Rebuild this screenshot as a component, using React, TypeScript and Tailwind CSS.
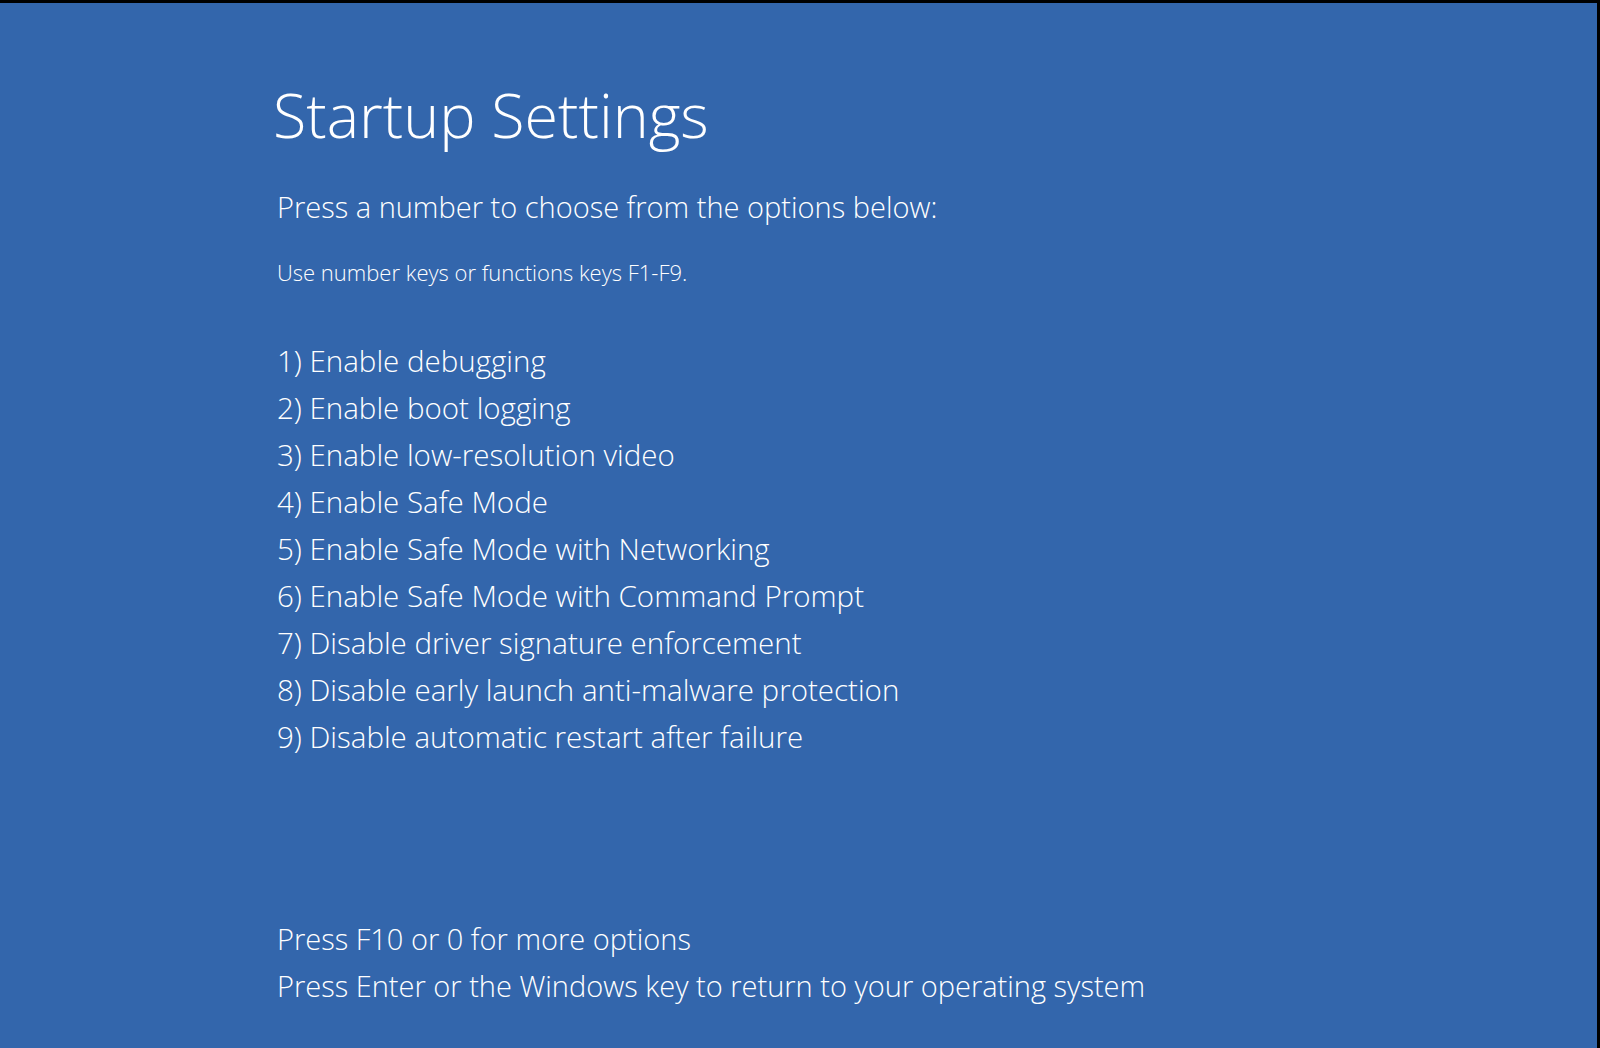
const options = [
  "1) Enable debugging",
  "2) Enable boot logging",
  "3) Enable low-resolution video",
  "4) Enable Safe Mode",
  "5) Enable Safe Mode with Networking",
  "6) Enable Safe Mode with Command Prompt",
  "7) Disable driver signature enforcement",
  "8) Disable early launch anti-malware protection",
  "9) Disable automatic restart after failure",
];

export default function App() {
  return (
    <div
      className="h-[1048px] w-[1600px] overflow-hidden border-t-[3px] border-r-[3px] border-black bg-[#3366ac] text-white"
      style={{ fontFamily: '"Open Sans", "Noto Sans", sans-serif' }}
    >
      <div className="flex flex-col pl-[277px] font-light">
        <h1 className="-ml-[4px] mt-[72px] text-[61px] leading-[80px]">Startup Settings</h1>
        <p className="mt-[29px] text-[29px] leading-[46px]">
          Press a number to choose from the options below:
        </p>
        <p className="mt-[27px] text-[22px] leading-[30px]">
          Use number keys or functions keys F1-F9.
        </p>
        <ul className="mt-[50px] flex flex-col">
          {options.map((o) => (
            <li key={o} className="text-[29.5px] leading-[47px]">
              {o}
            </li>
          ))}
        </ul>
        <div className="mt-[155px] flex flex-col text-[29px] leading-[47px]">
          <p>Press F10 or 0 for more options</p>
          <p>Press Enter or the Windows key to return to your operating system</p>
        </div>
      </div>
    </div>
  );
}
